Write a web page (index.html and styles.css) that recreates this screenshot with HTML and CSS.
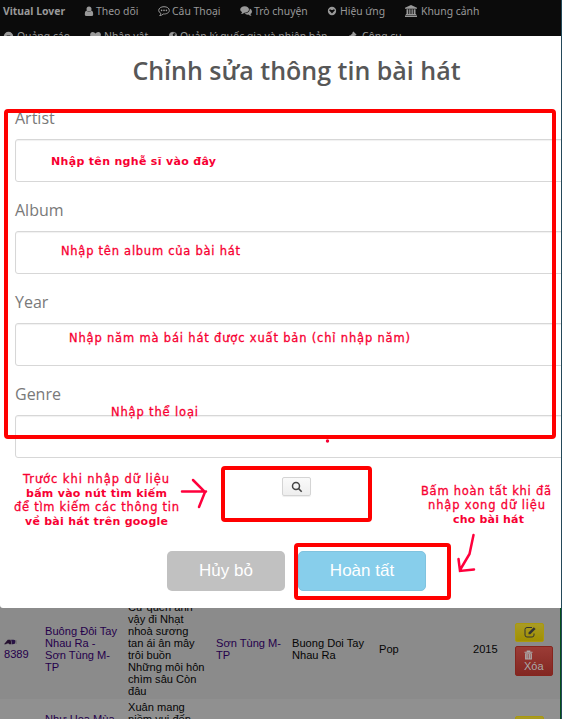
FILE: index.html
```
<!DOCTYPE html>
<html lang="vi">
<head>
<meta charset="utf-8">
<title>Vitual Lover</title>
<link rel="stylesheet" href="styles.css">
</head>
<body>
<div class="page">
  <nav class="nav">
    <div class="nav-row">
      <b class="brand">Vitual Lover</b>
      <a class="n-follow"><svg viewBox="0 0 12 12"><circle cx="6" cy="3.5" r="3"/><path d="M3 5.500C1 6 1 9 1 10.500Q1 12 3 12H9Q11 12 11 10.500C11 9 11 6 9 5.500Q6 8.500 3 5.500Z"/></svg><span>Theo dõi</span></a>
      <a class="n-line"><svg viewBox="0 0 12 12"><path d="M6 1.700C3 1.700 .7 3.200 .7 5.400Q.7 7.300 2.800 8.300Q2.700 9.800 1.700 10.600Q4 10.400 5.300 9C8.700 9.200 11.300 7.700 11.300 5.400C11.300 3.200 9 1.700 6 1.700Z" fill="none" stroke="#999" stroke-width="1"/><circle cx="3.600" cy="5.400" r=".8"/><circle cx="6" cy="5.400" r=".8"/><circle cx="8.400" cy="5.400" r=".8"/></svg><span>Câu Thoại</span></a>
      <a class="n-chat"><svg viewBox="0 0 12 12"><path d="M4.700 1.300C7.200 1.300 9 2.600 9 4.500S7.200 7.700 4.400 7.700Q3 9.100 1 9.100Q2 8.300 2 7.100Q.2 6 .2 4.500C.2 2.600 2.200 1.300 4.700 1.300Z"/><path d="M9.800 3.600Q12 4.600 12 6.500Q12 8 10.500 9Q10.600 10.200 11.600 11Q9.600 11 8.300 9.600Q6 9.900 4.500 8.600Q9.800 8.200 9.800 3.600Z"/></svg><span>Trò chuyện</span></a>
      <a class="n-effect"><svg viewBox="0 0 12 12"><path fill-rule="evenodd" d="M6 1A5 5 0 1 1 6 11A5 5 0 1 1 6 1ZM3.200 4.300L2.500 5L6 9L9.500 5L8.800 4.300L7.500 4.300Q6 5.500 4.500 4.300Z"/></svg><span>Hiệu ứng</span></a>
      <a class="n-scene"><svg viewBox="0 0 12 12"><path d="M6 0L12 2.800V3.800H0V2.800ZM1.500 4.300H3.300V9H4.200V4.300H5.500V9H6.500V4.300H7.800V9H8.700V4.300H10.500V9H11.200V10H.8V9H1.500ZM0 10.500H12V12H0Z"/></svg><span>Khung cảnh</span></a>
    </div>
    <div class="nav-row second">
      <a class="n-ads"><svg viewBox="0 0 12 12"><path fill-rule="evenodd" d="M6 .8A5.200 5.200 0 1 1 6 11.200A5.200 5.200 0 1 1 6 .8ZM4 5V7H8V5Z"/></svg><span>Quảng cáo</span></a>
      <a class="n-char"><svg viewBox="0 0 12 12"><path d="M6 11L.8 6C-.8 3.800 .6 1 3 1Q5 1 6 2.700Q7 1 9 1C11.400 1 12.800 3.800 11.200 6Z"/></svg><span>Nhân vật</span></a>
      <a class="n-country"><svg viewBox="0 0 12 12"><circle cx="6" cy="6" r="4.500" fill="none" stroke="#999" stroke-width="1"/><path d="M1.700 4Q3 1.500 6 1.500L7 3L5.500 4.500L6.500 6L5 7L4 9L3 7L1.500 6ZM8 4L10.300 4.500L10 8L8 7Z"/></svg><span>Quản lý quốc gia và phiên bản</span></a>
      <a class="n-tools"><svg viewBox="0 0 12 12"><path d="M6.500 .7L10.300 4.500L9 5.800L8.400 5.500L5.500 8.400L5.800 9L4.500 10.300L.7 6.500L2 5.200L2.600 5.500L5.500 2.600L5.200 2ZM7.500 7L11.500 11L10.700 11.800L6.700 7.800Z"/></svg><span>Công cụ</span></a>
    </div>
  </nav>

  <main class="songs">
    <div class="song">
      <div class="id"><svg class="adi" viewBox="0 0 16 6"><path d="M0 5.500L4 .5H7L8 5.500H5.500L5.300 4.500H3L2.300 5.500Z" fill="#25102f"/><path d="M7.600 .5H10Q12.800 .5 12.400 3Q12 5.500 9.500 5.500H8.500Z" fill="#291346"/><path d="M13 1V5" stroke="#777" stroke-width="1.500"/></svg><span>8389</span></div>
      <div class="link">Buông Đôi Tay<br>Nhau Ra -<br>Sơn Tùng M-<br>TP</div>
      <div>Cứ quên anh<br>vậy đi Nhạt<br>nhoà sương<br>tan ái ân mây<br>trôi buồn<br>Những môi hôn<br>chìm sâu Còn<br>đâu</div>
      <div class="link">Sơn Tùng M-<br>TP</div>
      <div>Buong Doi Tay<br>Nhau Ra</div>
      <div>Pop</div>
      <div>2015</div>
      <div class="actions">
        <button class="btn edit"><svg viewBox="0 0 12 12"><path d="M8 1.500H3Q1 1.500 1 3.500V9Q1 11 3 11H8Q10 11 10 9V7.500" fill="none" stroke="#333" stroke-width="1"/><path d="M4.500 6.500L9.800 1.200L11.600 3L6.300 8.300H4.500Z" fill="#333"/></svg></button>
        <button class="btn delete"><svg viewBox="0 0 10 10"><path d="M3 0H7V1.300H9.500V2.500H.5V1.300H3Z"/><path fill-rule="evenodd" d="M1.200 3H8.800V10H1.200ZM3 4V8.800H3.600V4ZM4.800 4V8.800H5.400V4ZM6.600 4V8.800H7.200V4Z"/></svg><span>Xóa</span></button>
      </div>
    </div>
    <div class="song next">
      <div></div>
      <div class="link second-title">Như Hoa Mùa</div>
      <div>Xuân mang<br>niềm vui đến</div>
      <div></div><div></div><div></div><div></div>
      <div class="actions"><button class="btn edit"></button></div>
    </div>
  </main>

  <section class="modal">
    <h2>Chỉnh sửa thông tin bài hát</h2>
    <label>Artist</label><input type="text">
    <label>Album</label><input type="text">
    <label>Year</label><input type="text">
    <label>Genre</label><input type="text">
    <button class="search"><svg viewBox="0 0 12 12"><circle cx="5" cy="5" r="3.500"/><path d="M7.600 7.600L10.700 10.700"/></svg></button>
    <div class="footer"><button class="cancel">Hủy bỏ</button><button class="confirm">Hoàn tất</button></div>
  </section>

  <svg class="notes" viewBox="0 0 562 719">
    <g class="frames">
      <rect x="6" y="111" width="548" height="326" rx="2"/>
      <rect x="223" y="468" width="147" height="52" rx="2"/>
      <rect x="296" y="545" width="153" height="53" rx="2"/>
    </g>
    <g class="arrows">
      <path d="M182 491.500H206M193 480L205 492L199 507"/>
      <path d="M473.500 535L469.500 554L460 570M458.500 559L460 571L474 569.500"/>
    </g>
    <circle cx="327.500" cy="441" r="1.700" fill="#f50032"/>
    <g class="words">
      <text x="51" y="165" textLength="165" class="strong">Nhập tên nghễ sĩ vào đây</text>
      <text x="61" y="255" textLength="179">Nhập tên album của bài hát</text>
      <text x="69" y="342" textLength="341">Nhập năm mà bái hát được xuất bản (chỉ nhập năm)</text>
      <text x="111" y="416" textLength="87">Nhập thể loại</text>
      <text x="23" y="483" textLength="146">Trước khi nhập dữ liệu</text>
      <text x="26" y="497" textLength="141" class="strong">bấm vào nút tìm kiếm</text>
      <text x="14" y="511" textLength="165">để tìm kiếm các thông tin</text>
      <text x="25" y="525" textLength="143" class="strong">về bài hát trên google</text>
      <text x="421" y="495" textLength="130">Bấm hoàn tất khi đã</text>
      <text x="428" y="509" textLength="117">nhập xong dữ liệu</text>
      <text x="453" y="523" textLength="71" class="strong">cho bài hát</text>
    </g>
  </svg>
</div>
</body>
</html>
```

FILE: styles.css
```
* { box-sizing: border-box; }
body { margin: 0; background: #8d8d8d; font-family: "Liberation Sans", sans-serif; }
.page { position: relative; width: 562px; height: 719px; overflow: hidden; display: flex; flex-direction: column; border-right: 1px solid #24495a; }

.nav { flex: none; height: 599px; background: #0b0b0b; color: #999; font: 10.400px/14px "Noto Sans", sans-serif; }
.nav-row { display: flex; padding: 4px 0 0 3px; height: 25px; white-space: nowrap; }
.nav-row a { display: flex; gap: 2px; align-items: center; height: 14px; flex: none; }
.nav svg { width: 10px; height: 10px; fill: #999; flex: none; }
.brand { width: 81px; flex: none; }
.n-follow { width: 74px; }
.nav-row .n-line { width: 82px; }
.nav-row .n-line svg, .nav-row .n-chat svg { width: 12px; height: 12px; }
.nav-row .n-chat { width: 87px; }
.nav-row .n-effect { width: 78px; gap: 3px; }
.nav-row .n-scene svg { width: 12px; height: 12px; }
.nav-row .n-scene { gap: 4px; }
.nav-row .n-ads { width: 87px; gap: 3px; }
.nav-row .n-ads svg, .nav-row .n-char svg { width: 11px; height: 11px; }
.nav-row .n-char { width: 78px; gap: 3px; }
.n-country { width: 180px; }
.nav-row .n-tools { gap: 4px; }

.songs { flex: none; border-right: 1px solid #07501b; color: #050505; font-size: 11.100px; line-height: 12px; }
.song { display: grid; grid-template-columns: 41px 83px 88px 76px 87px 94px 42px 45px; align-items: center; height: 100px; padding-left: 4px; background: #8b8b8b; white-space: nowrap; }
.next { align-items: start; background: #909090; padding-top: 2px; height: 60px; }
.link, .id { color: #25004b; }
.id span { display: block; }
.adi { display: block; width: 15px; height: 6px; margin-bottom: 3px; }
.second-title { padding-top: 12px; }
.actions { display: flex; flex-direction: column; align-items: flex-start; gap: 4px; }
.btn { margin: 0; padding: 0; border: 1px solid #aa990d; border-radius: 2px; }
.edit { display: flex; align-items: center; justify-content: center; width: 29px; height: 19px; background: linear-gradient(#a99b25, #a19000); }
.edit svg { width: 12px; height: 12px; }
.delete { display: flex; flex-direction: column; align-items: flex-start; width: 38px; height: 30px; padding: 3px 8px; border-color: #86251e; background: linear-gradient(#9b3c36, #832722); color: #aaa; font: 11px/12px "Liberation Sans", sans-serif; }
.delete svg { width: 9px; height: 10px; fill: #aaa; }
.next .actions { padding-top: 15px; }

.modal { position: absolute; left: 0; top: 36px; width: 561px; height: 572px; padding: 16px 0 0 15px; overflow: hidden; border-radius: 0 0 0 3px; background: #fff; font-family: "Open Sans", sans-serif; }
.modal h2 { margin: 0 0 15px -15px; padding-left: 32px; font-size: 25px; line-height: 36px; font-weight: 600; color: #575757; text-align: center; white-space: nowrap; }
.modal label { display: block; height: 36px; font-size: 16px; line-height: 30px; color: #797979; }
.modal input { display: block; width: 560px; height: 43px; margin: 0 0 13px; border: 1px solid #d7d7d7; border-radius: 3px; box-shadow: inset 0 1px 1px rgba(0,0,0,.06); background: #fff; }
.search { display: flex; align-items: center; justify-content: center; width: 29px; height: 19px; margin: 19px 0 0 267px; padding: 0; border: 1px solid #d4d4d4; border-radius: 2px; background: linear-gradient(#fafafa, #eee); box-shadow: 0 1px 1px #eee; }
.search svg { width: 12px; height: 12px; fill: none; stroke: #444; stroke-width: 1.500; }
.footer { display: flex; gap: 13px; margin: 55px 0 0 152px; }
.footer button { height: 40px; padding: 0; border: 0; border-radius: 5px; color: #fff; font: 17px/38px "Liberation Sans", sans-serif; }
.cancel { width: 118px; background: #c1c1c1; }
.footer .confirm { width: 128px; border: 1px solid #80c3df; background: #87ceeb; line-height: 36px; }

.notes { position: absolute; left: 0; top: 0; width: 562px; height: 719px; pointer-events: none; }
.frames { fill: none; stroke: #f00; stroke-width: 4; }
.arrows { fill: none; stroke: #ff003c; stroke-width: 2.500; stroke-linecap: round; }
.words { fill: #f70032; stroke: #f70032; stroke-width: .3; font: 11.500px "DejaVu Sans", sans-serif; }
.words .strong { font-weight: bold; font-size: 11px; stroke: none; }
```
